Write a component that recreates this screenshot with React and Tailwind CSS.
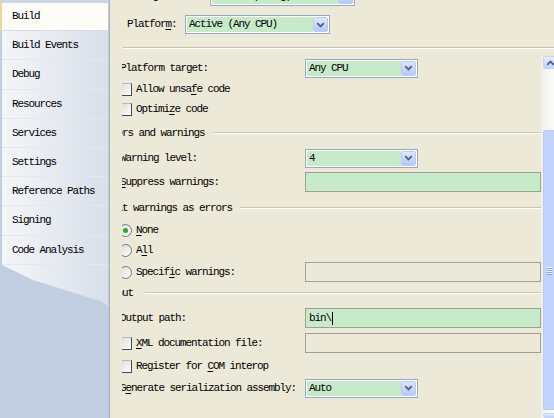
import React from 'react';

const tabs = [
  ['Build', 28],
  ['Build Events', 29],
  ['Debug', 30],
  ['Resources', 29],
  ['Services', 29],
  ['Settings', 29],
  ['Reference Paths', 29],
  ['Signing', 30],
  ['Code Analysis', 29],
];

function U({ children }) {
  return <span className="underline decoration-1 underline-offset-[2px]">{children}</span>;
}

function Chevron({ up = false }) {
  return (
    <svg width="9" height="6" viewBox="0 0 9 6" className={up ? 'rotate-180' : ''}>
      <path d="M1.2 1.2 L4.5 4.5 L7.8 1.2" fill="none" stroke="#4d6185" strokeWidth="1.8" />
    </svg>
  );
}

function Combo({ value, wide = false }) {
  return (
    <div className={`flex h-[19px] shrink-0 border border-[#9aa9c2] bg-white p-px ${wide ? 'w-[145px]' : 'w-[113px]'}`}>
      <div className="flex flex-1 items-center bg-[#c7ebc9] pl-[2px]">{value}</div>
      <div className="flex w-[15px] items-center justify-center rounded-[2px] border border-[#bccbf2] bg-gradient-to-b from-[#dde7fd] to-[#b6caf6]">
        <Chevron />
      </div>
    </div>
  );
}

function TextBox({ children, green = true }) {
  return (
    <div className={`flex h-[20px] w-[236px] shrink-0 items-center border border-[#9f9e97] pl-[3px] ${green ? 'bg-[#c7ebc9]' : 'bg-[#ece9d8]'}`}>
      {children}
    </div>
  );
}

function Check() {
  return (
    <span className="h-[13px] w-[13px] shrink-0 border border-[#b3b9c2] border-r-[#3f4a5a] border-b-[#3f4a5a] bg-gradient-to-br from-[#dcdad2] to-white" />
  );
}

function Radio({ on = false }) {
  return (
    <span className="flex h-[13px] w-[13px] shrink-0 items-center justify-center rounded-full border border-[#6b7a8c] bg-gradient-to-br from-[#dcdad2] to-white">
      {on && <span className="h-[5px] w-[5px] rounded-full bg-[#2fa52f]" />}
    </span>
  );
}

function Header({ children, gap = 'ml-[8px]', className = '' }) {
  return (
    <div className={`flex h-[18px] items-center ${className}`}>
      <span className="shrink-0">{children}</span>
      <div className={`h-0 flex-1 border-t border-t-[#c9c6b6] border-b border-b-white ${gap}`} />
    </div>
  );
}

function Sidebar() {
  return (
    <aside className="flex w-[110px] shrink-0 flex-col border-r border-[#aab0ba] bg-[#c1cde0]">
      <div className="h-[3px] bg-[#cdd6e4]" />
      <div className="ml-[2px] mr-[1px] bg-gradient-to-r from-[#f4f5f8] to-[#d8dfea]">
        {tabs.map(([name, h], i) =>
          i === 0 ? (
            <div
              key={name}
              style={{ height: h }}
              className="-ml-[2px] flex items-center border-l-2 border-[#f1d595] border-b border-b-[#d5dbe5] bg-[#fdfcf7] pl-[10px]"
            >
              {name}
            </div>
          ) : (
            <div key={name} style={{ height: h }} className="flex items-center border-b border-[#e3e7ee] pl-[10px]">
              {name}
            </div>
          )
        )}
      </div>
      <div className="ml-[2px] mr-[1px] h-[41px] bg-gradient-to-r from-[#f4f5f8] to-[#d8dfea] [clip-path:polygon(0_0,100%_0,100%_100%,98px_36px,31px_15px)]" />
    </aside>
  );
}

function Scrollbar() {
  return (
    <div className="mt-[4px] flex w-[17px] shrink-0 flex-col bg-gradient-to-r from-[#f0efe8] to-white">
      <div className="ml-[2px] flex h-[13px] items-center rounded-[2px] border border-[#c6d4f6] bg-gradient-to-b from-[#e6eefd] to-[#c3d4fb] pl-[2px]">
        <Chevron up />
      </div>
      <div className="h-[61px]" />
      <div className="ml-[2px] flex h-[280px] items-center rounded-[2px] border border-[#b9cbf6] bg-[#c2d3fc] pl-[2px]">
        <div className="flex flex-col gap-px">
          {[0, 1, 2, 3].map((k) => (
            <div key={k} className="h-px w-[6px] bg-[#eef3fe] shadow-[0_1px_0_#8ea7e6]" />
          ))}
        </div>
      </div>
      <div className="h-[3px]" />
      <div className="ml-[2px] flex-1 rounded-[2px] border border-[#c6d4f6] bg-gradient-to-b from-[#e6eefd] to-[#c3d4fb]" />
    </div>
  );
}

export default function App() {
  return (
    <div className="flex h-[418px] w-[554px] overflow-hidden bg-[#ece9d8] font-['Liberation_Mono',monospace] text-[11px] tracking-[-1.1px] text-black">
      <Sidebar />
      <main className="flex min-w-0 flex-1 flex-col">
        <div className="-mt-[13px] flex h-[19px] shrink-0 items-center">
          <span className="ml-[15px] w-[85px] shrink-0">Configuration:</span>
          <Combo value="Active (Debug)" wide />
        </div>
        <div className="mt-[9px] flex h-[19px] shrink-0 items-center">
          <span className="ml-[17px] w-[58px] shrink-0">
            Platfor<U>m</U>:
          </span>
          <Combo value="Active (Any CPU)" wide />
        </div>
        <div className="ml-[13px] mt-[13px] h-0 shrink-0 border-t border-t-[#c5c2b2] border-b border-b-white" />

        <div className="ml-[12px] mt-[3px] flex min-h-0 flex-1">
          <div className="w-[419px] shrink-0 overflow-hidden">
            <div className="-ml-[22px] flex flex-col pt-[6px]">
              <div className="flex h-[20px] items-center">
                <span className="w-[205px] shrink-0 pl-[20px]">Platform target:</span>
                <Combo value="Any CPU" />
              </div>
              <div className="mt-px flex h-[20px] items-center gap-[4px] pl-[19px]">
                <Check />
                <span>
                  Allow unsa<U>f</U>e code
                </span>
              </div>
              <div className="flex h-[20px] items-center gap-[4px] pl-[19px]">
                <Check />
                <span>
                  Optimi<U>z</U>e code
                </span>
              </div>

              <Header className="mt-[5px]">Errors and warnings</Header>
              <div className="mt-[6px] flex h-[20px] items-center">
                <span className="w-[205px] shrink-0 pl-[20px]">Warning level:</span>
                <Combo value="4" />
              </div>
              <div className="mt-[4px] flex h-[20px] items-center">
                <span className="w-[205px] shrink-0 pl-[20px]">
                  <U>S</U>uppress warnings:
                </span>
                <TextBox />
              </div>

              <Header className="mt-[7px]">Treat warnings as errors</Header>
              <div className="mt-[3px] flex h-[20px] items-center gap-[4px] pl-[19px]">
                <Radio on />
                <span>
                  <U>N</U>one
                </span>
              </div>
              <div className="flex h-[20px] items-center gap-[4px] pl-[19px]">
                <Radio />
                <span>
                  A<U>l</U>l
                </span>
              </div>
              <div className="mt-[2px] flex h-[20px] items-center">
                <div className="flex w-[205px] shrink-0 items-center gap-[4px] pl-[19px]">
                  <Radio />
                  <span>
                    Specif<U>i</U>c warnings:
                  </span>
                </div>
                <TextBox green={false} />
              </div>

              <Header className="mt-[2px]" gap="ml-[12px]">
                Output
              </Header>
              <div className="mt-[6px] flex h-[20px] items-center">
                <span className="w-[205px] shrink-0 pl-[20px]">Output path:</span>
                <TextBox>
                  bin\
                  <span className="ml-px inline-block h-[13px] w-px bg-black" />
                </TextBox>
              </div>
              <div className="mt-[5px] flex h-[20px] items-center">
                <div className="flex w-[205px] shrink-0 items-center gap-[4px] pl-[19px]">
                  <Check />
                  <span>
                    <U>X</U>ML documentation file:
                  </span>
                </div>
                <TextBox green={false} />
              </div>
              <div className="mt-[3px] flex h-[20px] items-center gap-[4px] pl-[19px]">
                <Check />
                <span>
                  Register for <U>C</U>OM interop
                </span>
              </div>
              <div className="mt-[2px] flex h-[20px] items-center">
                <span className="w-[205px] shrink-0 pl-[20px]">
                  G<U>e</U>nerate serialization assembly:
                </span>
                <Combo value="Auto" />
              </div>
            </div>
          </div>
          <Scrollbar />
        </div>
      </main>
    </div>
  );
}
